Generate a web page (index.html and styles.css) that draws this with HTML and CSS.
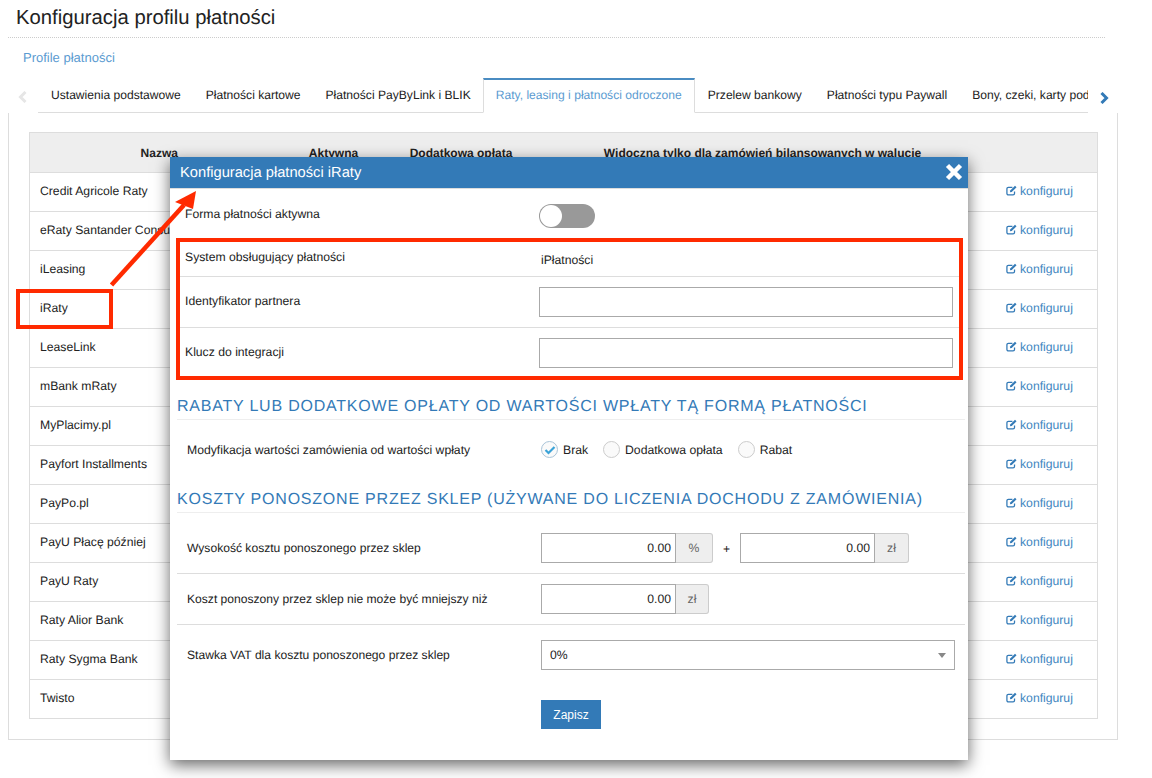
FILE: index.html
```html
<!DOCTYPE html>
<html lang="pl">
<head>
<meta charset="utf-8">
<title>Konfiguracja profilu płatności</title>
<link rel="stylesheet" href="styles.css">
</head>
<body>
<svg class="defs" width="0" height="0" aria-hidden="true">
  <symbol id="edit" viewBox="0 0 12 12">
    <path d="M9.300 7v2.200a1.600 1.600 0 0 1-1.600 1.600H2.600A1.600 1.600 0 0 1 1 9.200V4.100a1.600 1.600 0 0 1 1.600-1.600H7" fill="none" stroke="currentColor" stroke-width="1.400"/>
    <path d="M4.600 5.900 9.800 .8l1.700 1.700-5.200 5.100-2 .3z" fill="currentColor"/>
  </symbol>
</svg>
<header class="page-head"><h1>Konfiguracja profilu płatności</h1></header>
<nav class="crumbs"><a href="#">Profile płatności</a></nav>
<div class="tabs">
  <svg class="chev" width="10" height="12" viewBox="0 0 10 12"><path d="M7.500 1 2.500 6l5 5" fill="none" stroke="#e6e6e6" stroke-width="3"/></svg>
  <ul class="tab-list">
    <li class="tab">Ustawienia podstawowe</li>
    <li class="tab">Płatności kartowe</li>
    <li class="tab">Płatności PayByLink i BLIK</li>
    <li class="tab active">Raty, leasing i płatności odroczone</li>
    <li class="tab">Przelew bankowy</li>
    <li class="tab">Płatności typu Paywall</li>
    <li class="tab">Bony, czeki, karty podarunkowe</li>
  </ul>
  <svg class="chev" width="10" height="12" viewBox="0 0 10 12"><path d="M2.500 1l5 5-5 5" fill="none" stroke="#337ab7" stroke-width="3"/></svg>
</div>
<main class="panel">
  <table class="grid">
    <colgroup><col class="c1"><col class="c2"><col class="c3"><col class="c4"><col class="c5"></colgroup>
    <thead><tr><th>Nazwa</th><th>Aktywna</th><th>Dodatkowa opłata</th><th>Widoczna tylko dla zamówień bilansowanych w walucie</th><th></th></tr></thead>
    <tbody>
      <tr><td>Credit Agricole Raty</td><td></td><td></td><td></td><td class="act"><a href="#"><svg class="ico"><use href="#edit"/></svg> konfiguruj</a></td></tr>
      <tr><td>eRaty Santander Consumer</td><td></td><td></td><td></td><td class="act"><a href="#"><svg class="ico"><use href="#edit"/></svg> konfiguruj</a></td></tr>
      <tr><td>iLeasing</td><td></td><td></td><td></td><td class="act"><a href="#"><svg class="ico"><use href="#edit"/></svg> konfiguruj</a></td></tr>
      <tr><td>iRaty</td><td></td><td></td><td></td><td class="act"><a href="#"><svg class="ico"><use href="#edit"/></svg> konfiguruj</a></td></tr>
      <tr><td>LeaseLink</td><td></td><td></td><td></td><td class="act"><a href="#"><svg class="ico"><use href="#edit"/></svg> konfiguruj</a></td></tr>
      <tr><td>mBank mRaty</td><td></td><td></td><td></td><td class="act"><a href="#"><svg class="ico"><use href="#edit"/></svg> konfiguruj</a></td></tr>
      <tr><td>MyPlacimy.pl</td><td></td><td></td><td></td><td class="act"><a href="#"><svg class="ico"><use href="#edit"/></svg> konfiguruj</a></td></tr>
      <tr><td>Payfort Installments</td><td></td><td></td><td></td><td class="act"><a href="#"><svg class="ico"><use href="#edit"/></svg> konfiguruj</a></td></tr>
      <tr><td>PayPo.pl</td><td></td><td></td><td></td><td class="act"><a href="#"><svg class="ico"><use href="#edit"/></svg> konfiguruj</a></td></tr>
      <tr><td>PayU Płacę później</td><td></td><td></td><td></td><td class="act"><a href="#"><svg class="ico"><use href="#edit"/></svg> konfiguruj</a></td></tr>
      <tr><td>PayU Raty</td><td></td><td></td><td></td><td class="act"><a href="#"><svg class="ico"><use href="#edit"/></svg> konfiguruj</a></td></tr>
      <tr><td>Raty Alior Bank</td><td></td><td></td><td></td><td class="act"><a href="#"><svg class="ico"><use href="#edit"/></svg> konfiguruj</a></td></tr>
      <tr><td>Raty Sygma Bank</td><td></td><td></td><td></td><td class="act"><a href="#"><svg class="ico"><use href="#edit"/></svg> konfiguruj</a></td></tr>
      <tr><td>Twisto</td><td></td><td></td><td></td><td class="act"><a href="#"><svg class="ico"><use href="#edit"/></svg> konfiguruj</a></td></tr>
    </tbody>
  </table>
</main>

<section class="modal">
  <div class="modal-head">
    <span>Konfiguracja płatności iRaty</span>
    <svg class="close" width="18" height="18" viewBox="0 0 18 18"><path d="M2.500 2.500l13 13M15.500 2.500l-13 13" stroke="#fff" stroke-width="4.500"/></svg>
  </div>
  <div class="modal-body">
    <div class="row r-active">
      <label class="lbl">Forma płatności aktywna</label>
      <span class="toggle"><span class="knob"></span></span>
    </div>
    <div class="row r-system">
      <label class="lbl">System obsługujący płatności</label>
      <span class="val">iPłatności</span>
    </div>
    <div class="row r-field">
      <label class="lbl">Identyfikator partnera</label>
      <input class="txt" type="text">
    </div>
    <div class="row r-field last">
      <label class="lbl">Klucz do integracji</label>
      <input class="txt" type="text">
    </div>

    <h2 class="sec first">Rabaty lub dodatkowe opłaty od wartości wpłaty tą formą płatności</h2>
    <div class="row wide r-mod">
      <label class="lbl">Modyfikacja wartości zamówienia od wartości wpłaty</label>
      <div class="radios">
        <span class="radio on"><svg width="12" height="10" viewBox="0 0 12 10"><path d="M1.500 5l3 3 6-6" fill="none" stroke="#3aa3d8" stroke-width="2.200"/></svg></span><span class="rlbl">Brak</span>
        <span class="radio"></span><span class="rlbl">Dodatkowa opłata</span>
        <span class="radio"></span><span class="rlbl">Rabat</span>
      </div>
    </div>

    <h2 class="sec">Koszty ponoszone przez sklep (używane do liczenia dochodu z zamówienia)</h2>
    <div class="row wide r-cost first-cost">
      <label class="lbl">Wysokość kosztu ponoszonego przez sklep</label>
      <div class="group"><span class="num">0.00</span><span class="addon a1">%</span></div>
      <span class="plus">+</span>
      <div class="group"><span class="num">0.00</span><span class="addon a2">zł</span></div>
    </div>
    <div class="row wide r-cost">
      <label class="lbl">Koszt ponoszony przez sklep nie może być mniejszy niż</label>
      <div class="group"><span class="num">0.00</span><span class="addon a3">zł</span></div>
    </div>
    <div class="row wide r-vat">
      <label class="lbl">Stawka VAT dla kosztu ponoszonego przez sklep</label>
      <div class="select"><span>0%</span><i class="caret"></i></div>
    </div>
    <div class="actions"><button class="save" type="button">Zapisz</button></div>
  </div>
</section>

<div class="mark mark-row"></div>
<div class="mark mark-fields"></div>
<svg class="arrow" width="100" height="110" viewBox="0 0 100 110">
  <path d="M11.500 98 84 18" stroke="#ff2a00" stroke-width="4.500" fill="none"/>
  <path d="M96 4 75 15 93 22z" fill="#ff2a00"/>
</svg>
</body>
</html>
```
FILE: styles.css
```css
* { box-sizing: border-box; }
html, body { margin: 0; padding: 0; }
body {
  width: 1152px;
  height: 778px;
  overflow: hidden;
  position: relative;
  background: #fff;
  color: #222;
  font-family: "Liberation Sans", Arial, sans-serif;
  font-size: 12.200px;
  text-rendering: geometricPrecision;
}
a { color: #3d85c0; text-decoration: none; }
.defs { position: absolute; }

.page-head { margin: 0 47px 0 8px; height: 38px; border-bottom: 1px dotted #ccc; padding: 6px 0 0 8px; }
.page-head h1 { margin: 0; font-size: 20.300px; line-height: 24px; font-weight: 400; color: #222; }
.crumbs { height: 40px; padding: 12px 0 0 23px; font-size: 13px; line-height: 15px; }
.crumbs a { color: #5b9bd1; }

.tabs { display: flex; align-items: center; height: 35px; margin-left: 8px; width: 1110px; }
.tabs .chev { flex: none; }
.tabs .chev:first-child { margin: 3px 10px 0 10px; }
.tabs .chev:last-child { margin: 5px 0 0 11px; }
.tab-list {
  list-style: none; margin: 0; padding: 0;
  display: flex; flex: none; width: 1050px; height: 35px; overflow: hidden;
}
.tab {
  flex: none; height: 35px; padding: 10px 12px 0 13px; line-height: 15px; white-space: nowrap;
  color: #222; font-size: 12.100px; border-bottom: 1px solid #ddd;
}
.tab.active {
  color: #5b9bd1; border: 1px solid #ddd; border-top: 2px solid #4a8cc2; border-bottom-color: #fff;
  padding: 8px 12px 0 12px;
}

.panel {
  margin-left: 8px; width: 1110px; height: 627px;
  border: 1px solid #ddd; border-top: 0; padding: 19px 20px 0 20px;
}
.grid { width: 1068px; border-collapse: collapse; table-layout: fixed; }
.c1 { width: 259px; } .c2 { width: 90px; } .c3 { width: 165px; } .c4 { width: 438px; } .c5 { width: 116px; }
.grid th {
  height: 40px; background: #eee; border: 1px solid #ddd; border-width: 1px 0; text-align: center;
  font-size: 12px; font-weight: 700; color: #222; padding: 0;
}
.grid th:first-child { border-left: 1px solid #ddd; }
.grid th:last-child { border-right: 1px solid #ddd; }
.grid td { height: 39px; border-bottom: 1px solid #ddd; padding: 0 0 2px 10px; white-space: nowrap; overflow: hidden; }
.grid td:first-child { border-left: 1px solid #ddd; }
.grid td:last-child { border-right: 1px solid #ddd; }
.grid td.act { text-align: center; padding: 0 0 2px; }
.ico { width: 11px; height: 11px; vertical-align: -1px; color: #337ab7; }

.modal {
  position: absolute; left: 170px; top: 157px; width: 798px; height: 603px;
  background: #fff; box-shadow: 0 5px 15px rgba(0,0,0,.6);
}
.modal-head {
  height: 32px; background: #337ab7; color: #fff; font-size: 14.700px; display: flex; align-items: center;
  justify-content: space-between; padding: 0 5px 0 10px; border-bottom: 1px solid #ddd;
}
.close { margin-top: -2px; }
.modal-body { padding: 0 6px 0 7px; }
.row { display: flex; align-items: center; padding: 0 9px 0 8px; }
.row.wide { padding-left: 10px; border-bottom: 1px solid #ddd; margin-right: -3px; }
.lbl { width: 354px; flex: none; }
.r-cost .lbl, .r-vat .lbl { font-size: 12.100px; }
.row.r-active { height: 49px; }
.toggle { display: block; width: 56px; height: 24px; margin-top: 5px; border-radius: 12px; background: #999; position: relative; }
.knob { position: absolute; left: 1px; top: 1px; width: 22px; height: 22px; border-radius: 50%; background: #fff; }
.r-system { height: 39px; border-bottom: 1px solid #ddd; }
.val { padding: 6px 0 0 2px; }
.r-field { height: 51px; border-bottom: 1px solid #ddd; }
.r-field .lbl { padding-bottom: 3px; }
.r-field.last { height: 50px; border-bottom: 0; }
.txt { flex: 1; height: 30px; border: 1px solid #aaa; background: #fff; padding: 0 8px; margin: 0; }

.sec {
  margin: 0 -3px 0 0; height: 40px; padding-top: 17px; color: #337ab7; font-size: 16px; line-height: 20px; font-weight: 400;
  text-transform: uppercase; letter-spacing: .78px; border-bottom: 1px solid #eee; white-space: nowrap;
}
.sec.first { margin-top: 2px; }
.row.r-mod { height: 53px; border-bottom: 0; padding-top: 6px; }
.radios { display: flex; align-items: center; }
.radio {
  width: 17px; height: 17px; border-radius: 50%; border: 1px solid #ccc; background: #fafafa;
  display: flex; align-items: center; justify-content: center; flex: none;
}
.radio.on { border-color: #a9c4d8; }
.rlbl { margin: 0 15px 0 5px; }
.r-cost { height: 51px; }
.r-cost.first-cost { height: 61px; padding-top: 10px; }
.group { display: flex; height: 30px; }
.num { width: 135px; height: 30px; border: 1px solid #aaa; text-align: right; padding: 0 4px 0 0; line-height: 28px; color: #222; }
.addon {
  border: 1px solid #ccc; border-left: 0; border-radius: 0 3px 3px 0; background: #eee; color: #666; height: 30px;
  line-height: 28px; text-align: center;
}
.a1 { width: 37px; } .a2 { width: 34px; } .a3 { width: 33px; }
.plus { width: 27px; text-align: center; padding-top: 2px; }
.row.r-vat { height: 75px; border-bottom: 0; padding-top: 15px; padding-bottom: 30px; padding-right: 10px; }
.select {
  flex: 1; height: 30px; border: 1px solid #aaa; padding: 0 8px; line-height: 28px; color: #222;
  display: flex; justify-content: space-between; align-items: center;
}
.caret { width: 0; height: 0; border: 4px solid transparent; border-top: 5px solid #888; border-bottom: 0; }
.actions { padding-left: 364px; }
.save { display: block; width: 60px; height: 29px; border: 0; background: #337ab7; color: #fff; font: 12px "Liberation Sans", Arial, sans-serif; padding: 0; }

.mark { position: absolute; border: 4px solid #ff2a00; }
.mark-row { left: 16px; top: 289px; width: 97px; height: 40px; }
.mark-fields { left: 176px; top: 238px; width: 787px; height: 142px; }
.arrow { position: absolute; left: 100px; top: 187px; }
```
